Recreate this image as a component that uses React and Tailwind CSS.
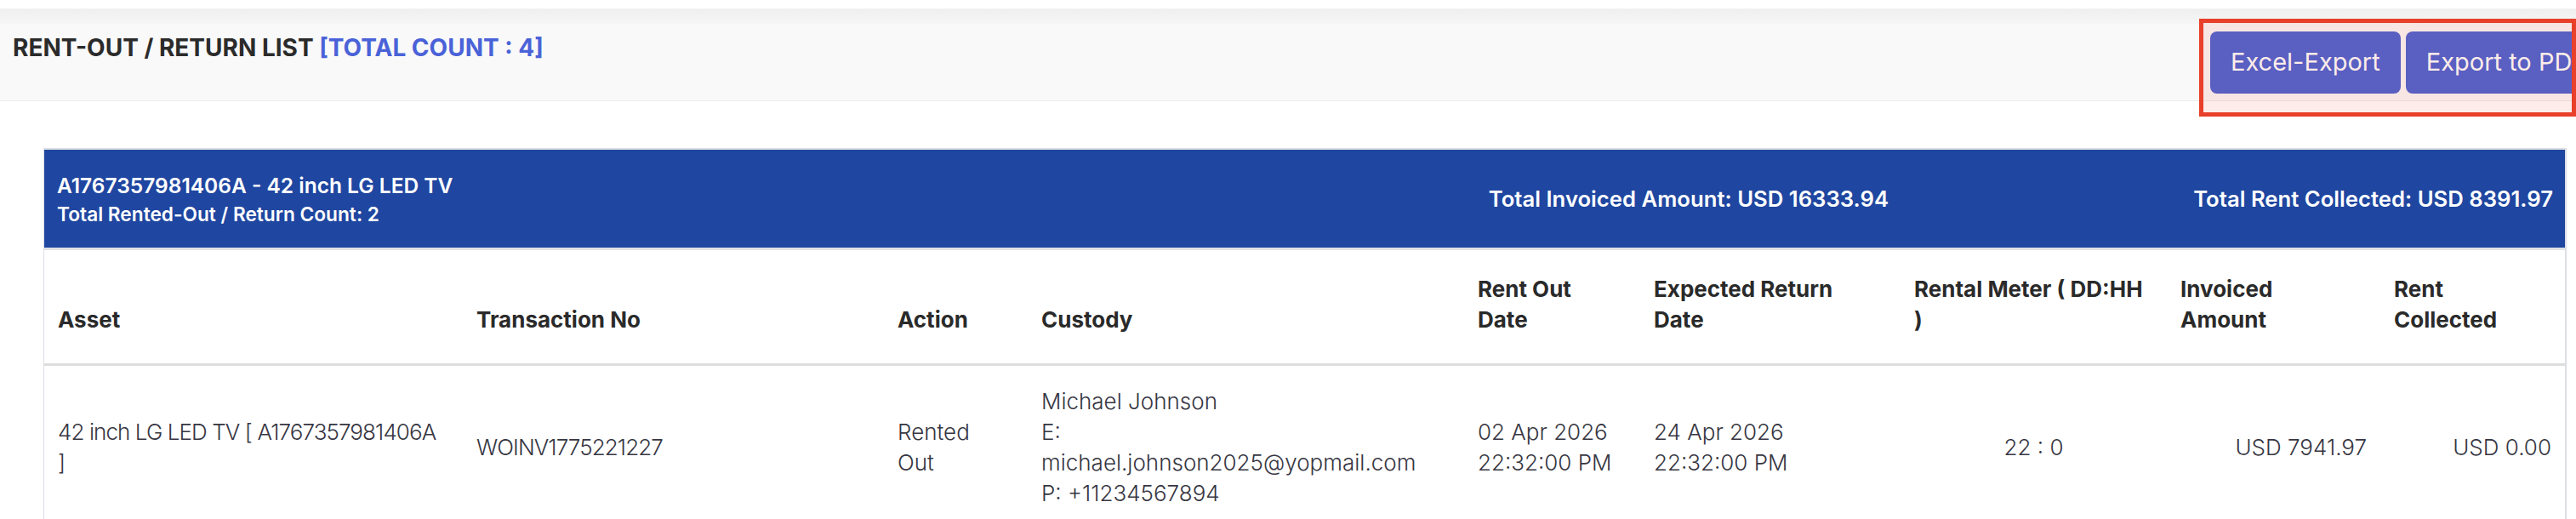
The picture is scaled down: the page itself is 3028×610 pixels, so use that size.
import React from "react";

const F = "font-['Inter','Noto_Sans',sans-serif]";

function Th({ children, className = "" }) {
  return (
    <th
      className={`align-bottom text-left font-bold text-[26px] leading-[36px] text-[#2a2a2a] px-[16px] pt-[28px] pb-[33px] border-b-[3px] border-[#dddddd] whitespace-nowrap ${className}`}
    >
      {children}
    </th>
  );
}

function Td({ children, className = "" }) {
  return (
    <td
      className={`align-middle font-light text-[26px] leading-[36px] text-[#363642] px-[16px] py-[24px] whitespace-nowrap ${className}`}
    >
      {children}
    </td>
  );
}

export default function App() {
  return (
    <div className={`relative w-[3028px] h-[610px] overflow-hidden bg-white ${F}`}>
      <div className="h-[10px] bg-white" />
      <div className="h-[18px] bg-gradient-to-b from-[#efefef] to-[#f6f6f6]" />

      {/* page header */}
      <div className="h-[91px] bg-[#f9f9f9] border-b border-[#ececec] grid grid-cols-[1fr_430px]">
        <h1 className="pl-[15px] pt-[10px] text-[28px] leading-[36px] font-bold text-[#2b2b2b] whitespace-nowrap">
          RENT-OUT / RETURN LIST{" "}
          <span className="text-[#4a62d8]">[TOTAL COUNT : 4]</span>
        </h1>
        <div className="flex items-center gap-[6px] whitespace-nowrap">
          <button className="shrink-0 h-[73px] px-[24px] rounded-[8px] bg-[#4a62d4] text-white text-[29px] font-normal">
            Excel-Export
          </button>
          <button className="shrink-0 h-[73px] px-[24px] rounded-[8px] bg-[#4a62d4] text-white text-[29px] font-normal">
            Export to PDF
          </button>
        </div>
      </div>

      {/* card */}
      <div className="mt-[55px] ml-[51px] w-[2966px] border-t-2 border-l border-r-2 border-[#dcdfe4]">
        <div className="h-[118px] bg-[#1f46a0] border-b-[3px] border-[#dfe1e4] flex items-center pl-[15px] pr-[14px] text-white font-semibold">
          <div className="flex-1">
            <div className="text-[24.5px] leading-[36px]">A1767357981406A - 42 inch LG LED TV</div>
            <div className="text-[22.7px] leading-[32px]">Total Rented-Out / Return Count: 2</div>
          </div>
          <div className="w-[781px] text-right text-[25.7px] leading-[34px] whitespace-nowrap">
            Total Invoiced Amount: USD 16333.94
          </div>
          <div className="w-[781px] text-right text-[25.7px] leading-[34px] whitespace-nowrap">
            Total Rent Collected: USD 8391.97
          </div>
        </div>

        <table className="w-full table-fixed">
          <colgroup>
            <col className="w-[492px]" />
            <col className="w-[495px]" />
            <col className="w-[169px]" />
            <col className="w-[513px]" />
            <col className="w-[207px]" />
            <col className="w-[306px]" />
            <col className="w-[313px]" />
            <col className="w-[251px]" />
            <col />
          </colgroup>
          <thead>
            <tr>
              <Th>Asset</Th>
              <Th>Transaction No</Th>
              <Th>Action</Th>
              <Th>Custody</Th>
              <Th>
                Rent Out
                <br />
                Date
              </Th>
              <Th>
                Expected Return
                <br />
                Date
              </Th>
              <Th>
                Rental Meter ( DD:HH
                <br />)
              </Th>
              <Th>
                Invoiced
                <br />
                Amount
              </Th>
              <Th>
                Rent
                <br />
                Collected
              </Th>
            </tr>
          </thead>
          <tbody>
            <tr>
              <Td className="tracking-[-0.035em]">
                42 inch LG LED TV [ A1767357981406A
                <br />]
              </Td>
              <Td className="tracking-[-0.035em]">WOINV1775221227</Td>
              <Td>
                Rented
                <br />
                Out
              </Td>
              <Td>
                Michael Johnson
                <br />
                E:
                <br />
                michael.johnson2025@yopmail.com
                <br />
                P: +11234567894
              </Td>
              <Td>
                02 Apr 2026
                <br />
                22:32:00 PM
              </Td>
              <Td>
                24 Apr 2026
                <br />
                22:32:00 PM
              </Td>
              <Td className="text-center">22 : 0</Td>
              <Td className="text-right">USD 7941.97</Td>
              <Td className="text-right">USD 0.00</Td>
            </tr>
          </tbody>
        </table>
      </div>

      {/* annotation highlight */}
      <div className="absolute left-[2585px] top-[22px] w-[443px] h-[115px] border-[5px] border-[#e8402a] bg-[#e8402a]/10" />
    </div>
  );
}
